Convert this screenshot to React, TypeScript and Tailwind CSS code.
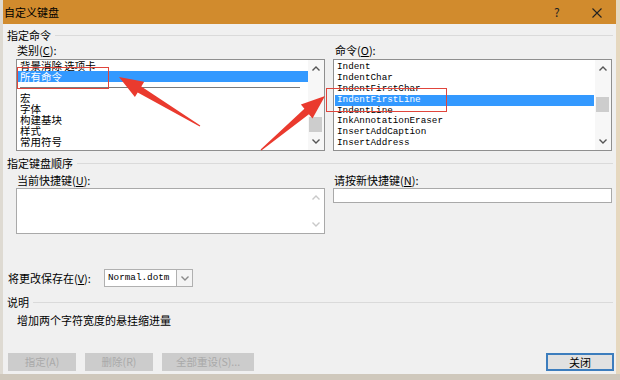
import React from "react";

const cjk = "font-['Noto_Sans_CJK_SC','Noto_Sans',sans-serif]";
const mono = "font-['Liberation_Mono',monospace]";

const categories = ["背景消除 选项卡", "所有命令", "-", "宏", "字体", "构建基块", "样式", "常用符号"];
const commands = [
  "Indent",
  "IndentChar",
  "IndentFirstChar",
  "IndentFirstLine",
  "IndentLine",
  "InkAnnotationEraser",
  "InsertAddCaption",
  "InsertAddress",
];

function Chevron({ up, color = "#555" }: { up?: boolean; color?: string }) {
  return (
    <svg width="8" height="5" viewBox="0 0 8 5">
      <polyline
        points={up ? "0.5,4.5 4,1 7.5,4.5" : "0.5,0.5 4,4 7.5,0.5"}
        fill="none"
        stroke={color}
        strokeWidth="1.4"
      />
    </svg>
  );
}

function ScrollBar({ thumbTop }: { thumbTop: number }) {
  return (
    <div className="w-[16px] flex flex-col bg-[#f7f7f7]">
      <div className="h-[17px] flex items-center justify-center">
        <Chevron up />
      </div>
      <div className="flex-1 relative">
        <div className="absolute left-[1px] w-[13px] h-[15px] bg-[#cdcdcd]" style={{ top: thumbTop }} />
      </div>
      <div className="h-[17px] flex items-center justify-center">
        <Chevron />
      </div>
    </div>
  );
}

function GroupHeader({ text }: { text: string }) {
  return (
    <div className="h-[12px] flex items-center pl-[4px] pr-[3px]">
      <span className="text-[11px] leading-[12px] text-black">{text}</span>
      <div className="flex-1 h-px bg-[#dadada] ml-[4px]" />
    </div>
  );
}

// tapered red annotation arrow, tail -> tip
function Arrow({ tail, tip }: { tail: [number, number]; tip: [number, number] }) {
  const dx = tip[0] - tail[0];
  const dy = tip[1] - tail[1];
  const len = Math.hypot(dx, dy);
  const ux = dx / len;
  const uy = dy / len;
  const nx = -uy;
  const ny = ux;
  const head = 24;
  const bx = tip[0] - ux * head;
  const by = tip[1] - uy * head;
  const p = (x: number, y: number) => `${x.toFixed(1)},${y.toFixed(1)}`;
  const pts = [
    p(tail[0] + nx * 0.6, tail[1] + ny * 0.6),
    p(bx + nx * 3.5, by + ny * 3.5),
    p(bx + nx * 9, by + ny * 9),
    p(tip[0], tip[1]),
    p(bx - nx * 9, by - ny * 9),
    p(bx - nx * 3.5, by - ny * 3.5),
    p(tail[0] - nx * 0.6, tail[1] - ny * 0.6),
  ].join(" ");
  return <polygon points={pts} fill="#ea3a2e" />;
}

export default function App() {
  return (
    <div className={`relative w-[620px] h-[380px] overflow-hidden bg-[#cfc8bc] ${cjk}`}>
      <div className="flex h-[374px]">
        <div className="w-[3px] bg-[#dedad2]" />
        <div className="w-[613px] flex flex-col bg-[#f0f0f0]">
          {/* title bar */}
          <div className="h-[24px] bg-[#d18b2d] flex items-center pl-[1px] relative">
            <span className="text-[11px] text-black">自定义键盘</span>
            <span className="absolute left-[551px] top-[5px] text-[12px] leading-[14px] text-[#222]">?</span>
            <svg className="absolute left-[589px] top-[8px]" width="10" height="10" viewBox="0 0 10 10">
              <path d="M0.5 0.5 L9.5 9.5 M9.5 0.5 L0.5 9.5" stroke="#222" strokeWidth="1.1" />
            </svg>
          </div>

          <div className="mt-[5px]">
            <GroupHeader text="指定命令" />
          </div>

          <div className="grid grid-cols-[309px_279px] gap-x-[8px] ml-[13px]">
            <div className="mt-[3px] h-[12px] pl-[1px] text-[11px] leading-[12px]">
              类别(<u>C</u>):
            </div>
            <div className="mt-[3px] h-[12px] pl-[2px] text-[11px] leading-[12px]">
              命令(<u>O</u>):
            </div>

            {/* categories list */}
            <div className="mt-[3px] h-[92px] border border-[#8f8f8f] bg-white flex">
              <div className="flex-1 flex flex-col overflow-hidden">
                {categories.map((c, i) =>
                  c === "-" ? (
                    <div key={i} className="h-[10px] flex items-center pl-[3px] pr-[6px]">
                      <div className="w-[280px] h-px bg-[#7a7a7a]" />
                    </div>
                  ) : (
                    <div
                      key={i}
                      className={`h-[11px] leading-[11px] text-[10.5px] pl-[2px] ml-[1px] whitespace-nowrap ${
                        i === 1 ? "bg-[#3399ff] text-white" : "text-black"
                      }`}
                    >
                      {c}
                    </div>
                  )
                )}
              </div>
              <ScrollBar thumbTop={40} />
            </div>

            {/* commands list */}
            <div className="mt-[3px] h-[92px] border border-[#8f8f8f] bg-white flex">
              <div className="flex-1 flex flex-col pt-[2px] overflow-hidden">
                {commands.map((c, i) => (
                  <div
                    key={c}
                    className={`h-[10.9px] leading-[10.9px] text-[9.3px] pl-[2px] ml-[1px] mr-[1px] ${mono} ${
                      i === 3 ? "bg-[#3399ff] text-white" : "text-black"
                    }`}
                  >
                    {c}
                  </div>
                ))}
              </div>
              <ScrollBar thumbTop={20} />
            </div>
          </div>

          <div className="mt-[6px]">
            <GroupHeader text="指定键盘顺序" />
          </div>

          <div className="grid grid-cols-[309px_279px] gap-x-[8px] ml-[13px]">
            <div className="mt-[5px] h-[12px] pl-[1px] text-[11px] leading-[12px]">
              当前快捷键(<u>U</u>):
            </div>
            <div className="mt-[5px] h-[12px] pl-[1px] text-[11px] leading-[12px]">
              请按新快捷键(<u>N</u>):
            </div>
            <div className="mt-[2px] h-[46px] border border-[#a9a9a9] bg-white flex justify-end">
              <div className="w-[16px] flex flex-col justify-between py-[6px] items-center">
                <Chevron up color="#c9c9c9" />
                <Chevron color="#c9c9c9" />
              </div>
            </div>
            <div className="mt-[2px] h-[15px] border border-[#a9a9a9] bg-white" />
          </div>

          {/* save in */}
          <div className="mt-[35px] h-[18px] flex items-center pl-[5px]">
            <div className="w-[96px] text-[11px] leading-[12px]">
              将更改保存在(<u>V</u>):
            </div>
            <div className="w-[73px] h-[18px] border border-[#b0b0b0] bg-white flex items-center pl-[3px]">
              <span className={`text-[9.3px] ${mono} text-black`}>Normal.dotm</span>
            </div>
            <div className="w-[16px] h-[18px] border border-l-0 border-[#b0b0b0] bg-[#f4f4f4] flex items-center justify-center">
              <Chevron color="#8a8a8a" />
            </div>
          </div>

          <div className="mt-[9px]">
            <GroupHeader text="说明" />
          </div>
          <div className="mt-[6px] h-[12px] pl-[14px] text-[11px] leading-[12px]">增加两个字符宽度的悬挂缩进量</div>

          {/* buttons */}
          <div className="mt-[27px] h-[18px] flex items-stretch pl-[5px] pr-[2px]">
            <div className="w-[68px] bg-[#cccccc] text-[#a9a9a9] text-[10.5px] flex items-center justify-center">
              指定(A)
            </div>
            <div className="w-[68px] ml-[9px] bg-[#cccccc] text-[#a9a9a9] text-[10.5px] flex items-center justify-center">
              删除(R)
            </div>
            <div className="w-[92px] ml-[9px] bg-[#cccccc] text-[#a9a9a9] text-[10.5px] flex items-center justify-center">
              全部重设(S)...
            </div>
            <div className="flex-1" />
            <div className="w-[68px] border-2 border-[#3c7dbd] bg-[#e1e1e1] text-black text-[11px] flex items-center justify-center">
              关闭
            </div>
          </div>
        </div>
        <div className="w-[4px] bg-[#e6d8bf]" />
      </div>

      {/* annotations */}
      <div className="absolute left-[17px] top-[67px] w-[92px] h-[22px] border border-[#e0453c]" />
      <div className="absolute left-[326px] top-[88px] w-[121px] h-[24px] border border-[#e0453c]" />
      <svg className="absolute left-0 top-0" width="620" height="380">
        <Arrow tail={[200, 126]} tip={[119, 77]} />
        <Arrow tail={[261, 150]} tip={[325, 96]} />
      </svg>
    </div>
  );
}
